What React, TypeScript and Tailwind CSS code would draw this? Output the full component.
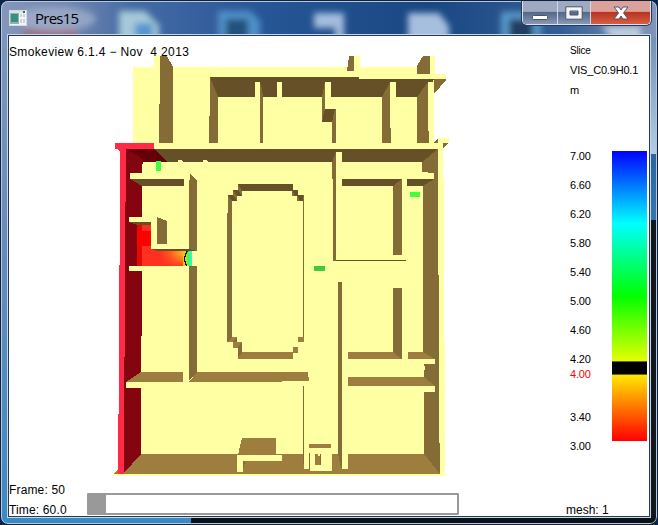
const LIGHT = "#ffffa3";
const DARK = "#665028";
const MID = "#856b35";
const TAN = "#9d7e3e";

// [colour, polygon points] painted in order, in window coordinates
const shapes: [string, string][] = [
  // rear rooms
  [LIGHT, "133,67 154,67 154,55 160,55 160,67 354,67 354,56 360,56 360,67 417,67 430,74 430,56 435,56 435,74 446,74 446,79 434,79 434,143 434,150 133,150"],
  [MID, "160,56 167,56 173,67 173,143 159,143 159,104 160,104"],
  [MID, "349,56 354,56 354,71 347,71 348,64"],
  [MID, "423,56 430,56 430,74 417,74 417,66"],
  [MID, "434,79 446,79 446,80 434,94"],
  [DARK, "210,77 359,77 359,79 434,79 428,97 218,97"],
  [MID, "210,77 218,97 218,143 209,143 209,116 210,116"],
  [LIGHT, "255,82 260,82 260,97 255,97"],
  [MID, "260,82 262,88 263,97 263,143 260,143"],
  [LIGHT, "277,82 282,82 282,97 277,97"],
  [MID, "325,82 325,109 322,122 322,97"],
  [LIGHT, "325,82 331,82 331,109 325,109"],
  [DARK, "325,109 336,109 332,122 322,122"],
  [MID, "335,109 336,109 336,143 332,143 332,122"],
  [MID, "390,82 390,128 391,128 391,143 382,143 382,97"],
  [LIGHT, "390,82 396,82 396,128 390,128"],
  [MID, "428,82 428,131 429,131 429,143 417,143 417,97"],
  [LIGHT, "428,82 434,82 434,143 429,143 429,131 428,131"],
  [LIGHT, "438,138 449,138 449,143 438,143"],
  [MID, "434,142 438,138 438,143 434,143"],
  [MID, "443,143 448,143 443,148"],
  // main floor
  [LIGHT, "133,143 443,143 443,179 444,179 444,341 445,341 445,476 112,476 118,472 125,149"],
  [DARK, "154,149 438,149 422,162 167,162"],
  [LIGHT, "178,162 178,160 182,160 183,162"],
  [LIGHT, "203,162 203,160 207,160 208,162"],
  // exterior wall on the left
  ["#ff2a46", "115,143 154,143 154,149 126,149 126,202 125,202 125,357 124,357 124,474 118,474 118,414 119,414 119,265 120,265 120,151 117,149 115,149"],
  ["#640008", "126,149 154,149 168,162 143,162"],
  ["#840410", "126,149 143,159 143,162 142,166 142,336 141,336 141,456 124,474 124,357 125,357 125,202 126,202"],
  [LIGHT, "130,173 190,173 190,179 130,179"],
  [DARK, "130,179 184,179 184,186 142,186"],
  [MID, "190,174 197,181 197,251 189,251 189,180 190,180"],
  ["#40ff40", "156,161 161,161 161,171 156,171"],
  [LIGHT, "129,217 151,217 151,222 129,222"],
  [DARK, "129,222 151,222 151,225 137,225"],
];

const afterSlice: [string, string][] = [
  [LIGHT, "151,217 189,217 189,249 151,249"],
  [MID, "157,217 167,221 167,244 157,244"],
  [DARK, "151,249 189,249 197,251 157,251"],
  [LIGHT, "129,266 189,266 189,271 129,271"],
  [MID, "189,266 197,266 197,372 189,381"],
  // oval
  [DARK, "238,184 293,184 293,191 242,191"],
  [MID, "238,184 242,191 242,196 238,191"],
  [DARK, "233,190 238,190 242,196 237,196"],
  [MID, "233,190 237,196 237,201 233,196"],
  [DARK, "228,195 233,195 237,201 232,201"],
  [DARK, "292,190 298,190 298,196 292,196"],
  [DARK, "297,195 304,195 304,201 297,201"],
  [MID, "292,190 295,196 292,196"],
  [MID, "297,195 300,201 297,201"],
  [MID, "228,195 232,201 232,338 227,342 227,213 228,213"],
  [MID, "303,195 304,195 304,341 303,341"],
  [TAN, "227,342 232,337 237,337 233,342"],
  [MID, "233,342 237,337 237,342 233,347"],
  [TAN, "233,342 237,342 242,342 238,348 233,348"],
  [MID, "238,347 242,342 242,352 238,359"],
  [TAN, "238,359 242,352 293,352 293,359"],
  [TAN, "293,347 298,347 298,353 293,353"],
  [TAN, "298,337 304,337 304,342 298,342"],
  // central spine and east rooms
  [MID, "336,152 336,261 333,261 333,179 332,179 332,162"],
  [LIGHT, "336,152 342,152 342,260 336,260"],
  [DARK, "336,260 406,260 406,261 336,261"],
  [MID, "438,149 438,275 439,275 439,443 440,443 440,474 424,454 424,372 425,368 424,364 423,352 423,186 434,179 434,173 422,172 422,162"],
  [DARK, "342,179 402,179 393,186 342,186"],
  [MID, "402,179 402,255 393,255 393,186"],
  [DARK, "407,179 434,179 423,186 407,186"],
  ["#40ff40", "410,192 420,192 420,197 410,197"],
  ["#40c840", "314,266 325,266 325,271 314,271"],
  [MID, "393,288 402,288 402,359 393,352"],
  [TAN, "348,352 393,352 402,359 348,359"],
  [TAN, "408,352 423,352 435,359 408,359"],
  [LIGHT, "408,359 435,359 435,364 408,364"],
  [TAN, "348,377 424,377 435,386 348,386"],
  [LIGHT, "348,386 435,386 435,392 348,392"],
  // south rooms
  [TAN, "141,372 183,372 183,382 126,382"],
  [TAN, "197,372 308,372 308,377 309,377 309,381 282,381 282,382 189,382"],
  [LIGHT, "126,382 189,382 189,388 126,388"],
  [MID, "303,386 304,386 304,464 303,464"],
  [TAN, "141,454 424,454 440,474 124,474 124,473"],
  [TAN, "113,474 118,469 118,474"],
  [TAN, "242,438 276,438 276,455 238,455 240,446"],
  [LIGHT, "237,455 282,455 282,461 243,461 243,472 237,472"],
  [MID, "243,461 245,461 244,468 243,468"],
  [LIGHT, "304,454 309,454 309,469 304,469"],
  [MID, "303,454 304,454 304,464 303,464"],
  [LIGHT, "310,449 332,449 332,471 310,471"],
  [MID, "309,453 310,453 310,470 309,470"],
  [TAN, "309,444 331,444 331,448 309,448"],
  [TAN, "315,454 318,454 318,456 320,456 320,454 321,454 321,465 315,465"],
  [MID, "320,454 321,454 321,465 320,465"],
  [LIGHT, "342,282 348,282 348,469 342,469"],
  [MID, "338,282 342,282 342,468 341,468 338,454"],
];

function Polys({ list }: { list: [string, string][] }) {
  return <>{list.map(([fill, points], i) => <polygon key={i} fill={fill} points={points} />)}</>;
}

function Scene() {
  return (
    <svg className="-mt-[8px] mb-px ml-[99px] block" width="345" height="424" viewBox="108 54 345 424" shapeRendering="crispEdges">
      <defs>
        <linearGradient id="flow">
          <stop offset="0" stopColor="#ff3020" />
          <stop offset=".35" stopColor="#ff5a20" />
          <stop offset=".7" stopColor="#ffa020" />
          <stop offset="1" stopColor="#ffd820" />
        </linearGradient>
        <linearGradient id="low" x2="0" y2="1">
          <stop offset=".2" stopColor="#ff3020" stopOpacity="0" />
          <stop offset="1" stopColor="#ff3020" stopOpacity=".9" />
        </linearGradient>
        <linearGradient id="edge">
          <stop offset="0" stopColor="#c8f020" />
          <stop offset=".5" stopColor="#50ef50" />
          <stop offset="1" stopColor="#20ffe0" />
        </linearGradient>
      </defs>
      <Polys list={shapes} />
      <rect x="137" y="225" width="5" height="41" fill="#e60804" />
      <rect x="142" y="225" width="47" height="41" fill="#ff3020" />
      <rect x="137" y="231" width="14" height="15" fill="#ff0000" />
      <rect x="160" y="251" width="29" height="15" fill="url(#flow)" />
      <rect x="160" y="251" width="23" height="15" fill="url(#low)" />
      <path d="M188 251Q181 258 188 266H192V251Z" fill="url(#edge)" />
      <path d="M188 251h-2v2h-1v3h-1v5h1v3h1v2h2" fill="none" stroke="#141400" />
      <Polys list={afterSlice} />
    </svg>
  );
}

function AppIcon() {
  return (
    <svg width="18" height="16" viewBox="0 0 18 16">
      <rect x=".5" y=".5" width="17" height="15" fill="#f4f4f4" stroke="#d4d9dd" />
      <path d="M1 1h15v2H1z" fill="#dce3e8" />
      <path d="M14 1h2v2h-2z" fill="#277278" />
      <path d="M1 3h9v11H1z" fill="#8fb3bd" />
      <path d="M2 4h7v8H2z" fill="#3a8f7d" />
      <path d="M11 4h2v3h-2zm3 0h2v3h-2zm-3 5h2v4h-2zm3 0h2v4h-2z" fill="#ced2d4" />
    </svg>
  );
}

function WindowButtons() {
  return (
    <div className="mr-[6px] flex h-[24px] w-[129px] overflow-hidden rounded-b-[5px] border border-t-0 border-[#dae2ed] shadow-[0_0_0_1px_#26375a]">
      <div className="flex w-[35px] items-center justify-center border-r border-[#d1d9e5] bg-linear-to-b from-[#9daac1] from-45% via-[#536987] via-50% to-[#8799b6]">
        <svg className="mt-[8px]" width="18" height="8"><rect x="1.5" y="2.5" width="15" height="4" rx="1" fill="#fff" stroke="#4b5568" /></svg>
      </div>
      <div className="flex w-[33px] items-center justify-center border-r border-[#d1d9e5] bg-linear-to-b from-[#9daac1] from-45% via-[#536987] via-50% to-[#8799b6]">
        <svg width="18" height="14"><path fillRule="evenodd" d="M.8 .8h16.4v12.4H.8zM5 5v4h8V5z" fill="#f4f4f4" stroke="#4b5568" /></svg>
      </div>
      <div className="flex flex-1 items-center justify-center bg-linear-to-b from-[#dba19b] from-45% via-[#b93422] via-50% to-[#d65d42]">
        <svg width="18" height="14" viewBox="0 0 18 14"><path d="M2 1h5l2 3 2-3h5l-4.5 6 4.5 6h-5l-2-3-2 3H2l4.5-6z" fill="#fff" stroke="#56536a" /></svg>
      </div>
    </div>
  );
}

function TitleBackdrop() {
  return (
    <svg className="absolute left-0 top-0" width="658" height="34">
      <defs>
        <filter id="soft" x="-30%" y="-50%" width="160%" height="200%"><feGaussianBlur stdDeviation="3.2" /></filter>
        <linearGradient id="glass">
          <stop offset="0" stopColor="#8497bb" />
          <stop offset=".1" stopColor="#7287b0" />
          <stop offset=".2" stopColor="#456ba5" />
          <stop offset=".4" stopColor="#275696" />
          <stop offset=".65" stopColor="#194782" />
          <stop offset=".85" stopColor="#335d95" />
          <stop offset="1" stopColor="#8397b8" />
        </linearGradient>
      </defs>
      <rect width="658" height="36" fill="url(#glass)" />
      <g filter="url(#soft)">
        <rect x="22" y="28" width="54" height="14" fill="#9b6f83" />
        <ellipse cx="55" cy="18" rx="40" ry="12" fill="#a6b4cf" opacity=".7" />
        <path d="M118 10h26l14 14v18h-40z" fill="#a6c9d8" />
        <path d="M134 22h18v20h-18z" fill="#5597ce" />
        <path d="M217 10h32l10 10v22h-42z" fill="#4f91c7" />
        <path d="M225 18h22v22h-22z" fill="#23517b" />
        <path d="M313 12h30v30h-9V27h-21z" fill="#a4bddd" />
        <path d="M407 12h31l10 13v17h-41z" fill="#a7bfdf" />
        <path d="M500 11h40v30h-40z" fill="#599aca" />
        <path d="M508 18h24v22h-24z" fill="#213d60" />
        <path d="M600 25h40v14h-28z" fill="#bdcbdd" />
      </g>
    </svg>
  );
}

const ticks = ["7.00", "6.60", "6.20", "5.80", "5.40", "5.00", "4.60", "4.20"];

function Legend() {
  return (
    <div className="absolute right-0 top-0 flex h-full w-[80px] flex-col pl-px text-[11px]">
      <div className="mt-[8px] h-[12px] text-[10px] leading-[13px] tracking-[-0.2px]">Slice</div>
      <div className="mt-[8px] h-[12px] whitespace-nowrap text-[11px] leading-[12px] tracking-[-0.18px]">VIS_C0.9H0.1</div>
      <div className="mt-[8px] h-[12px] leading-[12px]">m</div>
      <div className="mt-[55px] flex justify-between pr-[2px]">
        <div className="-mt-px leading-[12px] tracking-[-0.2px]">
          {ticks.map((t, i) => <div key={t} className={i === 7 ? "h-[15px]" : "h-[29px]"}>{t}</div>)}
          <div className="h-[43px] text-[#ff0000]">4.00</div>
          <div className="h-[29px]">3.40</div>
          <div>3.00</div>
        </div>
        <div className="h-[290px] w-[35px] bg-[linear-gradient(to_bottom,#0000ff_0%,#00ffff_25%,#00ff00_50%,#ffff00_75%,#ff0000_100%)] pt-[210px]">
          <div className="h-[14px] border-y border-[#686800] bg-black" />
        </div>
      </div>
    </div>
  );
}

export default function App() {
  return (
    <div className="relative flex h-[525px] w-[658px] flex-col overflow-hidden bg-[#0b2449] font-['Liberation_Sans',Arial,sans-serif] text-black">
      <div className="relative flex h-full w-full flex-col overflow-hidden rounded-[8px] border border-[#10203f] bg-linear-to-b from-[#8197bb] via-[#648cb9] to-[#398bc4]">
        <div className="absolute bottom-0 right-0 h-[304px] w-[9px] bg-[#11171d]" />
        <div className="absolute right-0 top-[36px] h-[118px] w-[9px] bg-linear-to-b from-[#7291b5] to-[#b1cde4]" />
        <div className="absolute right-0 top-[153px] h-[66px] w-[9px] bg-linear-to-b from-[#2b659e] to-[#3477ae]" />
        <div className="absolute bottom-0 left-[190px] right-0 h-[8px] bg-[#0c1117]" />
        <TitleBackdrop />
        <div className="absolute inset-0 rounded-[7px] border border-[#b5c8de]" />
        <header className="relative flex h-[33px] shrink-0 items-start">
          <div className="ml-[8px] mt-[9px]"><AppIcon /></div>
          <div className="ml-[8px] mt-[8px] font-['Open_Sans',sans-serif] text-[15px] leading-[19px] tracking-[-0.75px]">Pres15</div>
          <div className="ml-auto"><WindowButtons /></div>
        </header>
        <main className="relative ml-[6px] h-[484px] w-[644px] shrink-0 border border-[#c7d6e5] bg-white shadow-[inset_0_0_0_1px_#273956]">
          <div className="relative ml-px mt-px h-[480px] w-[640px]">
            <div className="relative z-10 pt-[9px]">
              <div className="h-[17px] w-[190px] whitespace-pre text-[12px] leading-[14px] tracking-[0.36px]">Smokeview 6.1.4 − Nov  4 2013</div>
            </div>
            <Scene />
            <footer className="flex h-[38px] items-start">
              <div className="w-[78px] pt-px text-[12px] leading-[20px] tracking-[0.15px]">
                <div className="whitespace-nowrap">Frame: 50</div>
                <div className="whitespace-nowrap">Time: 60.0</div>
              </div>
              <div className="mt-[14px] h-[22px] w-[372px] rounded-[1px] border-2 border-[#999999]">
                <div className="h-full w-[17px] bg-[#999999]" />
              </div>
              <div className="ml-[107px] mt-[21px] whitespace-nowrap text-[12px] leading-[20px]">mesh: 1</div>
            </footer>
            <Legend />
          </div>
        </main>
      </div>
    </div>
  );
}
